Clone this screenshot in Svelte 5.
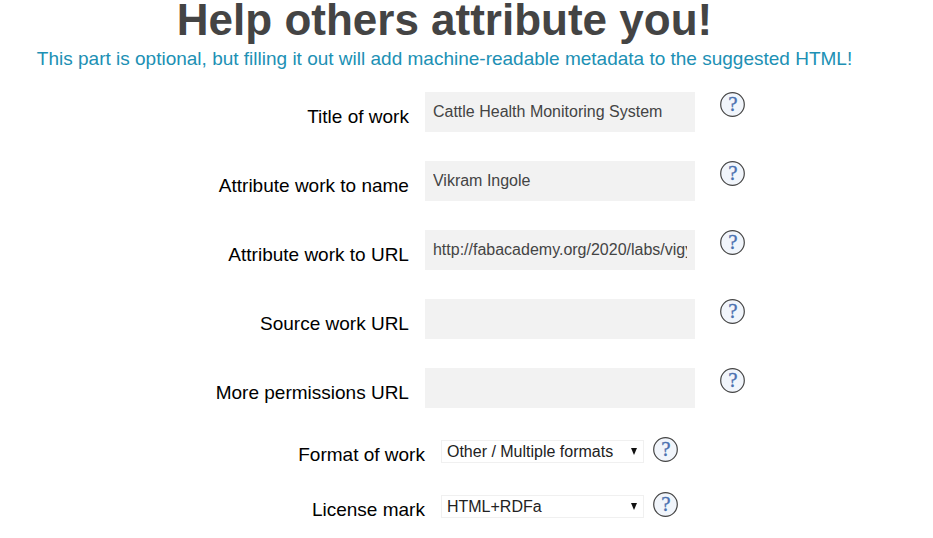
<script lang="ts">
    let fields = $state([
        {id: "title", label: "Title of work", value: "Cattle Health Monitoring System"},
        {id: "name", label: "Attribute work to name", value: "Vikram Ingole"},
        {id: "url", label: "Attribute work to URL", value: "http://fabacademy.org/2020/labs/vigyanashram/students/vikram-ingole"},
        {id: "source", label: "Source work URL", value: ""},
        {id: "permissions", label: "More permissions URL", value: ""}
    ]);

    let selects = $state([
        {
            id: "format",
            label: "Format of work",
            value: "Other / Multiple formats",
            options: ["Other / Multiple formats", "Audio", "Video", "Image", "Text", "Dataset", "Interactive"]
        },
        {
            id: "mark",
            label: "License mark",
            value: "HTML+RDFa",
            options: ["HTML+RDFa", "XMP"]
        }
    ]);
</script>

{#snippet help(id: string, label: string)}
    <a class="help" href="#help-{id}" aria-label="Help: {label}">
        <svg viewBox="0 0 25 25" aria-hidden="true">
            <circle cx="12.5" cy="12.5" r="11.8"/>
            <text x="13" y="19" text-anchor="middle">?</text>
        </svg>
    </a>
{/snippet}

<main>
    <h1>Help others attribute you!</h1>
    <p>This part is optional, but filling it out will add machine-readable metadata to the suggested HTML!</p>

    <form>
        {#each fields as field (field.id)}
            <div class="row">
                <label for={field.id}>{field.label}</label>
                <input id={field.id} type="text" bind:value={field.value}/>
                {@render help(field.id, field.label)}
            </div>
        {/each}

        {#each selects as field (field.id)}
            <div class="row choice">
                <label for={field.id}>{field.label}</label>
                <div class="select">
                    <select id={field.id} bind:value={field.value}>
                        {#each field.options as option}
                            <option>{option}</option>
                        {/each}
                    </select>
                    <svg class="arrow" viewBox="0 0 6 7" aria-hidden="true">
                        <path d="M0 0h6L3 7z"/>
                    </svg>
                </div>
                {@render help(field.id, field.label)}
            </div>
        {/each}
    </form>
</main>

<style>
    :global(body) {
        margin: 0;
        background: #fff;
    }

    main {
        padding-right: 44px;
        font-family: "Liberation Sans", Arial, sans-serif;
        color: #000;
    }

    h1 {
        margin: 0;
        font-size: 44px;
        line-height: 40px;
        text-align: center;
        color: #444;
    }

    p {
        margin: 7px 0 21px;
        font-size: 19px;
        line-height: 24px;
        text-align: center;
        color: #2090b4;
    }

    .row {
        display: grid;
        grid-template-columns: 46% 270px 25px;
        column-gap: 16px;
        align-items: start;
        margin-bottom: 29px;
    }

    label {
        padding-top: 13px;
        font-size: 19px;
        line-height: 24px;
        text-align: right;
    }

    input {
        box-sizing: border-box;
        width: 100%;
        height: 40px;
        padding: 0 8px;
        border: 0;
        border-radius: 0;
        background: #f2f2f2;
        font: 16px "Liberation Sans", Arial, sans-serif;
        color: #444;
    }

    .help {
        width: 25px;
        height: 25px;
        margin-left: 9px;
    }

    .help svg {
        display: block;
        width: 25px;
        height: 25px;
    }

    .help circle {
        fill: #f1f5fb;
        stroke: #444;
        stroke-width: 1.2;
    }

    .help text {
        font: 21px "Liberation Serif", "Times New Roman", serif;
        fill: #4a70b0;
        stroke: #4a70b0;
        stroke-width: 0.3;
    }

    .choice {
        grid-template-columns: calc(46% + 16px) 203px 25px;
    }

    .choice label {
        height: 20px;
        padding-top: 6px;
    }

    .choice .help {
        margin-left: -7px;
    }

    .select {
        display: grid;
        align-items: center;
        margin-top: 3px;
    }

    .select > :global(*) {
        grid-area: 1 / 1;
    }

    select {
        appearance: none;
        box-sizing: border-box;
        width: 100%;
        height: 23px;
        padding: 0 5px;
        border: 1px solid #f0f0f0;
        border-radius: 0;
        background: #fff;
        font: 16px "Liberation Sans", Arial, sans-serif;
        color: #222;
    }

    .arrow {
        justify-self: end;
        width: 6px;
        height: 7px;
        margin-right: 7px;
        fill: #111;
        pointer-events: none;
    }
</style>
